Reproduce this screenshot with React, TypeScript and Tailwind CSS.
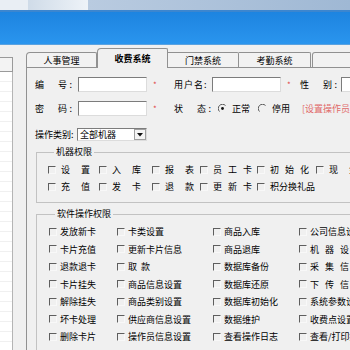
import React from 'react';

const machineRows = [
  [
    { t: '设　置', s: 'tracking-[1px]' },
    { t: '入　库', s: 'tracking-[1px]' },
    { t: '报　表', s: 'tracking-[1px]' },
    { t: '员工卡', s: 'tracking-[6px]' },
    { t: '初始化', s: 'tracking-[6px]' },
    { t: '现　金', s: 'tracking-[1px]' },
  ],
  [
    { t: '充　值', s: 'tracking-[1px]' },
    { t: '发　卡', s: 'tracking-[1px]' },
    { t: '退　款', s: 'tracking-[1px]' },
    { t: '更新卡', s: 'tracking-[6px]' },
    { t: '积分换礼品', s: '' },
  ],
];
const machineCols = ['w-[51px]', 'w-[53px]', 'w-[48px]', 'w-[57px]', 'w-[59px]', 'w-[50px]'];

const softRows = [
  [{ t: '发放新卡' }, { t: '卡类设置' }, { t: '商品入库' }, { t: '公司信息设置' }],
  [{ t: '卡片充值' }, { t: '更新卡片信息' }, { t: '商品退库' }, { t: '机器设置', s: 'tracking-[6px]' }],
  [{ t: '退款退卡' }, { t: '取　款', s: 'tracking-[-2.5px]' }, { t: '数据库备份' }, { t: '采集信息', s: 'tracking-[6px]' }],
  [{ t: '卡片挂失' }, { t: '商品信息设置' }, { t: '数据库还原' }, { t: '下传信息', s: 'tracking-[6px]' }],
  [{ t: '解除挂失' }, { t: '商品类别设置' }, { t: '数据库初始化' }, { t: '系统参数设置' }],
  [{ t: '坏卡处理' }, { t: '供应商信息设置' }, { t: '数据维护' }, { t: '收费点设置' }],
  [{ t: '删除卡片' }, { t: '操作员信息设置' }, { t: '查看操作日志' }, { t: '查看/打印报表' }],
];
const softCols = ['w-[68px]', 'w-[96px]', 'w-[86px]', 'w-[80px]'];

const Box = () => (
  <span className="w-[8px] h-[8px] shrink-0 border-t border-l border-[#5e5e5e] border-r border-b border-r-[#f8f8f8] border-b-[#f8f8f8]" />
);

const Check = ({ label, sp = '', w, gap }: { label: string; sp?: string; w: string; gap: string }) => (
  <div className={`${w} shrink-0 flex items-center`}>
    <Box />
    <span className={`${gap} ${sp} whitespace-nowrap leading-none`}>{label}</span>
  </div>
);

const Radio = ({ on }: { on?: boolean }) => (
  <svg width="9" height="9" viewBox="0 0 9 9" className="shrink-0">
    <path d="M7.5 1.5 A4 4 0 0 0 1.5 7.5" fill="none" stroke="#555" strokeWidth="1" />
    {on && <circle cx="4.5" cy="4.5" r="1.4" fill="#111" />}
  </svg>
);

const Input = ({ w }: { w: string }) => (
  <div className={`${w} h-[15px] shrink-0 bg-white border border-[#7c7c7c] border-r-[#dcdcdc] border-b-[#dcdcdc]`} />
);

const Star = ({ w }: { w: string }) => (
  <span className={`${w} shrink-0 pl-[6px] text-[#e04444] text-[8px] leading-none`}>*</span>
);

const App: React.FC = () => {
  return (
    <div className="w-[350px] h-[350px] overflow-hidden bg-[#f0f0f0] flex flex-col text-[9px] text-black font-['Noto_Sans_CJK_SC','Noto_Sans',sans-serif]">
      {/* window top */}
      <div className="h-[10px] shrink-0 flex">
        <div className="w-[28px] bg-[#e9eef4]" />
        <div className="w-[60px] bg-gradient-to-r from-[#cfdbe8] to-[#eef3f8]" />
        <div className="flex-1 bg-gradient-to-r from-[#b9cbe0] to-[#9fb8d4]" />
      </div>
      <div className="h-[2px] shrink-0 bg-[#3c86cf]" />
      <div className="h-[33px] shrink-0 bg-gradient-to-b from-[#1d84e0] to-[#2a95ee] border-b border-[#5aa2e0]" />

      <div className="flex-1 flex">
        {/* left list */}
        <div className="w-[13px] shrink-0 flex flex-col pt-[12px]">
          <div className="h-[15px] shrink-0 border border-l-0 border-[#9a9a9a] bg-[#f3f3f3]" />
          <div className="flex-1 bg-white border-r border-[#b4b4b4] flex flex-col">
            {Array.from({ length: 27 }).map((_, i) => (
              <div key={i} className="h-[10px] shrink-0 border-b border-[#f0f0f0]" />
            ))}
          </div>
        </div>

        {/* tab control */}
        <div className="ml-[13px] flex-1 flex flex-col pt-[3px]">
          <div className="h-[19px] shrink-0 flex items-end">
            <div className="w-[71px] h-[15px] shrink-0 flex items-center justify-center border border-b-0 border-[#919191] rounded-tl-[4px] rounded-tr-[2px] bg-[#f2f2f2] leading-none">
              人事管理
            </div>
            <div className="w-[71px] h-[20px] shrink-0 -mb-px relative z-10 flex items-center justify-center border border-b-0 border-[#919191] rounded-tl-[4px] rounded-tr-[2px] bg-[#f0f0f0] font-bold leading-none">
              收费系统
            </div>
            <div className="w-[71px] h-[15px] shrink-0 flex items-center justify-center border border-b-0 border-l-0 border-[#919191] rounded-tr-[2px] bg-[#f2f2f2] leading-none">
              门禁系统
            </div>
            <div className="w-[72px] h-[15px] shrink-0 flex items-center justify-center border border-b-0 border-l-0 border-[#919191] rounded-tr-[2px] bg-[#f2f2f2] leading-none">
              考勤系统
            </div>
            <div className="w-[60px] h-[15px] shrink-0 ml-px border border-b-0 border-[#919191] rounded-tl-[3px] bg-[#f2f2f2]" />
          </div>

          <div className="flex-1 border-t border-l border-[#919191] pl-[8px] pt-[9px] flex flex-col">
            {/* row 1 */}
            <div className="h-[15px] flex items-center">
              <span className="w-[43px] shrink-0 tracking-[2.5px] leading-none">编　号:</span>
              <Input w="w-[69px]" />
              <Star w="w-[27px]" />
              <span className="w-[38px] shrink-0 tracking-[1px] leading-none">用户名:</span>
              <Input w="w-[69px]" />
              <Star w="w-[19px]" />
              <span className="w-[41px] shrink-0 tracking-[2.5px] leading-none">性　别:</span>
              <Input w="w-[60px]" />
            </div>

            {/* row 2 */}
            <div className="h-[15px] mt-[9px] flex items-center">
              <span className="w-[43px] shrink-0 tracking-[2.5px] leading-none">密　码:</span>
              <Input w="w-[69px]" />
              <Star w="w-[27px]" />
              <span className="w-[44px] shrink-0 tracking-[2.5px] leading-none">状　态:</span>
              <div className="w-[40px] shrink-0 flex items-center">
                <Radio on />
                <span className="ml-[5px] leading-none">正常</span>
              </div>
              <div className="w-[44px] shrink-0 flex items-center">
                <Radio />
                <span className="ml-[5px] leading-none">停用</span>
              </div>
              <span className="whitespace-nowrap text-[#e06868] leading-none">[设置操作员权限]</span>
            </div>

            {/* row 3 */}
            <div className="h-[13px] mt-[12px] flex items-center">
              <span className="w-[42px] shrink-0 leading-none">操作类别:</span>
              <div className="w-[70px] h-[13px] shrink-0 flex items-center bg-white border border-[#7c7c7c] border-r-[#dcdcdc] border-b-[#dcdcdc]">
                <span className="flex-1 pl-[2px] leading-none">全部机器</span>
                <div className="w-[12px] h-[11px] flex items-center justify-center border border-[#a0a0a0] bg-[#f4f4f4]">
                  <svg width="6" height="4" viewBox="0 0 6 4">
                    <path d="M0 0 H6 L3 3.5 Z" fill="#111" />
                  </svg>
                </div>
              </div>
            </div>

            {/* machine permissions */}
            <fieldset className="w-[330px] ml-px mt-[5px] border border-[#c2c2c2] pl-[11px] pt-[3px] pb-[7px]">
              <legend className="ml-[6px] px-[2px] leading-[12px]">机器权限</legend>
              {machineRows.map((row, r) => (
                <div key={r} className="h-[17px] flex items-center">
                  {row.map((c, i) => (
                    <Check key={i} label={c.t} sp={c.s} w={machineCols[i]} gap="ml-[5px]" />
                  ))}
                </div>
              ))}
            </fieldset>

            {/* software permissions */}
            <fieldset className="w-[330px] ml-px mt-[5px] border border-[#c2c2c2] pl-[12px] pt-[3px] pb-[4px]">
              <legend className="ml-[6px] px-[2px] leading-[12px]">软件操作权限</legend>
              {softRows.map((row, r) => (
                <div key={r} className="h-[17.5px] flex items-center">
                  {row.map((c, i) => (
                    <Check key={i} label={c.t} sp={c.s} w={softCols[i]} gap="ml-[3px]" />
                  ))}
                </div>
              ))}
            </fieldset>
          </div>
        </div>
      </div>
    </div>
  );
};

export default App;
